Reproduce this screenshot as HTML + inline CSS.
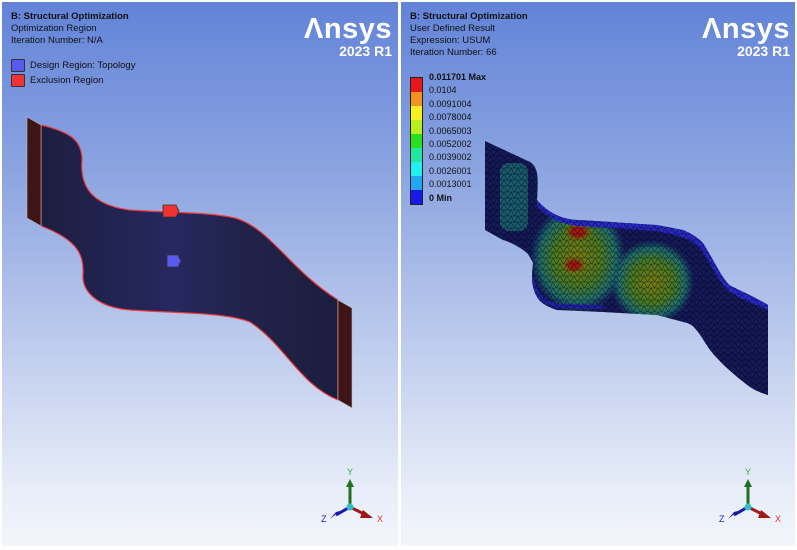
<!DOCTYPE html>
<html><head><meta charset="utf-8"><style>
html,body{margin:0;padding:0;width:797px;height:550px;background:#fff;overflow:hidden;font-family:"Liberation Sans",sans-serif}
.p{position:absolute;top:2px;height:544px;background:linear-gradient(#6283d8 0%,#8aa3e0 30%,#b9c8ec 60%,#e8edf8 90%,#f3f5fb 100%)}
.t{position:absolute;font-size:9.5px;line-height:12px;color:#111}
.t b{font-weight:bold}
.logo{position:absolute;color:#fff;font-weight:bold;text-align:right}
.logo .a{font-size:29px;line-height:30px;letter-spacing:0.5px}
.logo .r{font-size:14px;line-height:15px}
.leg{position:absolute;font-size:9.5px;color:#111}
.sw{display:inline-block;width:12px;height:11px;border:1px solid #333;vertical-align:middle;margin-right:5px;border-radius:1px}
.cb{position:absolute;left:410px;top:77px}
.cb div{width:11px;height:14px;border-left:1px solid #222;border-right:1px solid #222}
.cl{position:absolute;left:429px;font-size:9px;color:#111}
</style></head><body>
<div class="p" style="left:2px;width:396px"></div>
<div class="p" style="left:401px;width:394px"></div>

<div class="t" style="left:11px;top:11px"><b>B: Structural Optimization</b><br>Optimization Region<br>Iteration Number: N/A</div>
<div class="leg" style="left:11px;top:59px"><span class="sw" style="background:#5a5af0"></span>Design Region: Topology</div>
<div class="leg" style="left:11px;top:74px"><span class="sw" style="background:#f03232"></span>Exclusion Region</div>
<div class="logo" style="right:405px;top:14px"><div class="a">Λnsys</div><div class="r">2023 R1</div></div>

<div class="t" style="left:410px;top:11px"><b>B: Structural Optimization</b><br>User Defined Result<br>Expression: USUM<br>Iteration Number: 66</div>
<div class="logo" style="right:7px;top:14px"><div class="a">Λnsys</div><div class="r">2023 R1</div></div>

<div class="cb" style="border-top:1px solid #222;border-bottom:1px solid #222">
<div style="background:#e81818"></div><div style="background:#f5921e"></div><div style="background:#f5f020"></div><div style="background:#b8ef1c"></div><div style="background:#28e020"></div><div style="background:#20e8a0"></div><div style="background:#20f0f0"></div><div style="background:#20a8f0"></div><div style="background:#1818e8"></div>
</div>
<div class="cl" style="top:72px;font-weight:bold">0.011701 Max</div>
<div class="cl" style="top:85px">0.0104</div>
<div class="cl" style="top:99px">0.0091004</div>
<div class="cl" style="top:112px">0.0078004</div>
<div class="cl" style="top:126px">0.0065003</div>
<div class="cl" style="top:139px">0.0052002</div>
<div class="cl" style="top:152px">0.0039002</div>
<div class="cl" style="top:166px">0.0026001</div>
<div class="cl" style="top:179px">0.0013001</div>
<div class="cl" style="top:193px;font-weight:bold">0 Min</div>

<svg width="797" height="550" style="position:absolute;left:0;top:0">
<defs>
<linearGradient id="nv" x1="0" x2="1"><stop offset="0" stop-color="#1c1e40"/><stop offset="0.45" stop-color="#262860"/><stop offset="0.7" stop-color="#202248"/><stop offset="1" stop-color="#1c1e40"/></linearGradient>
<pattern id="mesh" width="7" height="6" patternUnits="userSpaceOnUse"><path d="M0 0H7M0 0L3.5 6L7 0M0 6H7" stroke="#000" stroke-width="0.6" fill="none" opacity="0.6"/></pattern>
<radialGradient id="hot" cx="0.5" cy="0.5" r="0.5"><stop offset="0" stop-color="#b01010"/><stop offset="0.4" stop-color="#982010"/><stop offset="0.75" stop-color="#7a6a10" stop-opacity="0.6"/><stop offset="1" stop-color="#6a7a10" stop-opacity="0"/></radialGradient>
<radialGradient id="warm" cx="0.5" cy="0.5" r="0.5"><stop offset="0" stop-color="#7a7a14"/><stop offset="0.5" stop-color="#4a7a24"/><stop offset="0.8" stop-color="#1f6e6e"/><stop offset="1" stop-color="#1a5a70" stop-opacity="0"/></radialGradient>
<clipPath id="rc"><path d="M485 141 L530 162 C540 168 538 185 537 200 C550 215 565 220 580 220 L657 225 L683 230 C695 235 700 240 703 243 C715 262 725 285 733 287 C750 295 760 300 768 305 L768 395 C758 392 755 390 750 387 C730 372 718 360 710 350 C700 335 695 325 687 323 L657 315 L603 312 L557 310 C545 306 540 302 537 297 C533 290 532 283 532 277 C532 270 533 265 533 263 C530 257 528 254 527 253 C520 247 510 242 503 240 L485 230 Z"/></clipPath>
</defs>
<!-- left strip -->
<path d="M41 125 C70 132 82 140 82 160 C80 185 90 205 130 210 C170 213 210 212 235 218 C270 228 290 270 338 300 L338 400 C300 385 285 345 250 322 C225 312 170 313 130 310 C95 307 82 290 83 275 C84 255 78 240 41 226 Z" fill="url(#nv)" stroke="#f03a3a" stroke-width="1.2"/>
<path d="M27 117 L41 125 L41 226 L27 218 Z" fill="#3e1414" stroke="#bbb" stroke-width="0.6"/>
<path d="M338 300 L352 308 L352 408 L338 400 Z" fill="#3e1414" stroke="#bbb" stroke-width="0.6"/>
<path d="M163 205 H176 L179 211 L176 217 H163 Z" fill="#f03232" stroke="#333" stroke-width="0.8"/>
<path d="M167 255 H178 L181 261 L178 267 H167 Z" fill="#5a5af0" stroke="#333" stroke-width="0.8"/>
<!-- right deformed strip -->
<g clip-path="url(#rc)">
<rect x="480" y="135" width="300" height="270" fill="#141a5a"/>
<rect x="500" y="163" width="28" height="68" rx="9" fill="#1a5a6e"/>
<path d="M537 175 C545 205 565 215 580 220 L575 228 C555 220 540 205 537 195 Z" fill="#1a7a80"/>
<ellipse cx="578" cy="258" rx="48" ry="55" fill="url(#warm)"/>
<ellipse cx="578" cy="232" rx="16" ry="11" fill="url(#hot)"/>
<ellipse cx="574" cy="265" rx="14" ry="10" fill="url(#hot)"/>
<ellipse cx="652" cy="282" rx="42" ry="42" fill="url(#warm)"/>
<path d="M537 200 C550 215 565 220 580 220 L657 225 L683 230 C695 235 700 240 703 243 C715 262 725 285 733 287 C750 295 760 300 768 305 L768 310 C755 305 740 298 730 292 C720 285 710 262 700 248 C690 238 680 236 657 231 L580 226 C560 225 545 215 537 206 Z" fill="#2828c8"/>
<path d="M532 277 C534 295 545 305 560 306 L603 307" stroke="#2222b0" stroke-width="4" fill="none"/>
<rect x="480" y="135" width="300" height="270" fill="url(#mesh)"/>
</g>
<!-- triads -->
<g transform="translate(350,507)"><line x1="0" y1="0" x2="0" y2="-22" stroke="#207020" stroke-width="3"/><path d="M-4 -20 L0 -28 L4 -20 Z" fill="#207020"/><line x1="0" y1="0" x2="16" y2="8" stroke="#a01818" stroke-width="3"/><path d="M13 3 L23 11 L10 11 Z" fill="#a01818"/><line x1="0" y1="0" x2="-14" y2="8" stroke="#1818b0" stroke-width="3"/><path d="M-10 4 L-20 12 L-14 5 Z" fill="#1818b0"/><circle r="3.5" fill="#30c0c8"/><text x="-3" y="-32" font-size="9" fill="#30b030">Y</text><text x="27" y="15" font-size="9" fill="#e03030">X</text><text x="-29" y="15" font-size="9" fill="#2020d0">Z</text></g>
<g transform="translate(748,507)"><line x1="0" y1="0" x2="0" y2="-22" stroke="#207020" stroke-width="3"/><path d="M-4 -20 L0 -28 L4 -20 Z" fill="#207020"/><line x1="0" y1="0" x2="16" y2="8" stroke="#a01818" stroke-width="3"/><path d="M13 3 L23 11 L10 11 Z" fill="#a01818"/><line x1="0" y1="0" x2="-14" y2="8" stroke="#1818b0" stroke-width="3"/><path d="M-10 4 L-20 12 L-14 5 Z" fill="#1818b0"/><circle r="3.5" fill="#30c0c8"/><text x="-3" y="-32" font-size="9" fill="#30b030">Y</text><text x="27" y="15" font-size="9" fill="#e03030">X</text><text x="-29" y="15" font-size="9" fill="#2020d0">Z</text></g>
</svg>
</body></html>
